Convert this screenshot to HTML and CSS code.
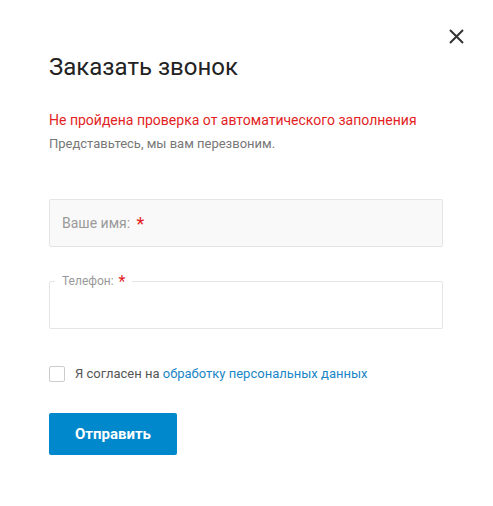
FILE: index.html
```html
<!DOCTYPE html>
<html lang="ru">
<head>
<meta charset="utf-8">
<title>Заказать звонок</title>
<link rel="stylesheet" href="styles.css">
</head>
<body>
<div class="modal">
  <button class="close" type="button" aria-label="Закрыть">
    <svg width="15" height="15" viewBox="0 0 15 15"><path d="M1 1L14 14M14 1L1 14" stroke="#333" stroke-width="2" fill="none"/></svg>
  </button>
  <h2 class="title">Заказать звонок</h2>
  <p class="error">Не пройдена проверка от автоматического заполнения</p>
  <p class="subtitle">Представьтесь, мы вам перезвоним.</p>
  <form class="form">
    <div class="field field-name">
      <span class="placeholder">Ваше имя: <span class="star">*</span></span>
    </div>
    <div class="field field-phone">
      <span class="legend">Телефон: <span class="star">*</span></span>
    </div>
    <label class="agree">
      <span class="checkbox"></span>
      <span class="agree-text">Я согласен на <a href="#" class="link">обработку персональных данных</a></span>
    </label>
    <button class="submit" type="button">Отправить</button>
  </form>
</div>
</body>
</html>
```
FILE: styles.css
```css
* { box-sizing: border-box; }
html, body { margin: 0; padding: 0; background: #fff; }
body { font-family: Roboto, "Noto Sans", Arial, sans-serif; color: #333; }
.modal {
  position: relative;
  width: 493px;
  height: 506px;
  padding: 53px 51px 0 49px;
}
.close {
  position: absolute;
  top: 29px;
  left: 449px;
  width: 15px;
  height: 15px;
  padding: 0;
  border: 0;
  background: none;
  display: block;
}
.close svg { display: block; }
.title {
  margin: 0;
  font-size: 24px;
  line-height: 28px;
  font-weight: 400;
  color: #222;
}
.error {
  margin: 29px 0 0;
  font-size: 14px;
  line-height: 20px;
  color: #e31e24;
}
.subtitle {
  margin: 4px 0 0;
  font-size: 13px;
  line-height: 20px;
  color: #777;
}
.form { margin-top: 45px; display: flex; flex-direction: column; align-items: flex-start; }
.field {
  position: relative;
  width: 394px;
  height: 48px;
  border: 1px solid #e5e5e5;
  border-radius: 2px;
}
.field-name {
  background: #f9f9f9;
  display: flex;
  align-items: center;
  padding-left: 12px;
}
.placeholder { font-size: 14px; color: #999; line-height: 20px; }
.star { color: #e31e24; font-size: 18px; line-height: 14px; vertical-align: -2px; margin-left: 3px; }
.field-phone { margin-top: 34px; background: #fff; }
.legend {
  position: absolute;
  top: -8px;
  left: 5px;
  padding: 0 6px 0 7px;
  background: #fff;
  font-size: 12px;
  line-height: 14px;
  color: #999;
}
.legend .star { font-size: 16px; margin-left: 2px; }
.agree {
  margin-top: 37px;
  display: flex;
  align-items: center;
  gap: 10px;
  font-size: 13px;
  line-height: 16px;
  color: #555;
}
.checkbox {
  width: 16px;
  height: 16px;
  border: 1px solid #ccc;
  border-radius: 2px;
  background: #fff;
  flex: none;
}
.link { color: #1a86c6; text-decoration: none; }
.submit {
  margin-top: 31px;
  width: 128px;
  height: 42px;
  border: 0;
  border-radius: 2px;
  background: #0088cc;
  color: #fff;
  font-family: Roboto, "Noto Sans", Arial, sans-serif;
  font-size: 15px;
  font-weight: 700;
  padding: 0;
}
```
